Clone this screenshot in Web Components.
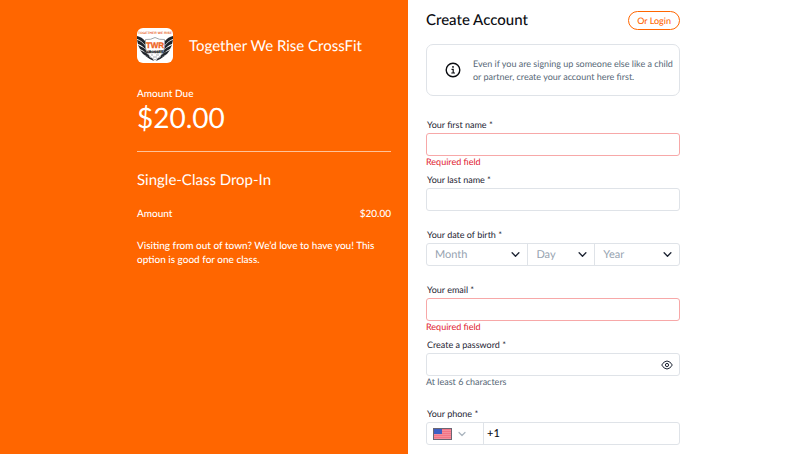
<!DOCTYPE html>
<html lang="en">
<head>
<meta charset="utf-8">
<meta name="viewport" content="width=device-width, initial-scale=1">
<title>Create Account</title>
<style>
  body {
    margin: 0;
    font-family: Lato, "Liberation Sans", sans-serif;
    font-size: 9px;
    text-rendering: geometricPrecision;
    color: #1d2433;
    background: white;
    --brand: #ff6600;
    --line: #dfe3e8;
    --muted: #566776;
    --error: #e0202e;
  }
</style>
</head>
<body>
<signup-page>
  <order-summary slot="summary" due="$20.00" item="Single-Class Drop-In" amount="$20.00">
    <gym-logo slot="logo"></gym-logo>
    <span slot="gym">Together We Rise CrossFit</span>
    Visiting from out of town? We’d love to have you! This option is good for one class.
  </order-summary>
  <account-header slot="form">Create Account</account-header>
  <info-note slot="form">Even if you are signing up someone else like a child or partner, create your account here first.</info-note>
  <text-field slot="form" label="Your first name *" error="Required field"></text-field>
  <text-field slot="form" label="Your last name *"></text-field>
  <birth-field slot="form" label="Your date of birth *"></birth-field>
  <text-field slot="form" type="email" label="Your email *" error="Required field"></text-field>
  <password-field slot="form" label="Create a password *" hint="At least 6 characters"></password-field>
  <phone-field slot="form" label="Your phone *" value="+1"></phone-field>
</signup-page>

<script>
function webComponent(tag, style, template) {
  customElements.define(tag, class extends HTMLElement {
    constructor() {
      super();
      const attr = (name) => this.getAttribute(name) ?? "";
      this.attachShadow({ mode: "open" }).innerHTML = `
        <style>
          * { box-sizing: border-box; }
          ${style}
        </style>
        ${template(attr)}
      `;
    }
  });
}

const fieldCss = /*css*/`
  :host { display: block; min-height: 55px; }
  label { display: block; padding-left: 1px; line-height: 17px; }
  input, select, button { font: inherit; color: inherit; margin: 0; text-rendering: inherit; }
  input { font-size: 11px; min-width: 0; outline: none; }
  .box {
    display: flex;
    width: 100%;
    height: 23px;
    border: 1px solid var(--line);
    border-radius: 3px;
    background: white;
  }
  .box > input { flex: 1; border: 0; padding: 0 8px; background: none; }
  .box > button { border: 0; background: none; padding: 0 6px; display: flex; align-items: center; }
  .box.invalid { border-color: #f7a8a8; }
  p { margin: 0; line-height: 12px; }
  .error { color: var(--error); }
  .hint { color: var(--muted); }
`;

const chevron = (color, size) => `
  <svg width="${size}" height="${size}" viewBox="0 0 8 8" fill="none" stroke="${color}">
    <path d="M1 2.5 4 5.5 7 2.5" stroke-width="1.2" stroke-linecap="round" stroke-linejoin="round"/>
  </svg>`;

webComponent("signup-page", /*css*/`
  :host { display: grid; grid-template-columns: 51fr 49fr; min-height: 100vh; }
  aside { background: var(--brand); color: white; display: flex; justify-content: flex-end; padding: 28px 17px; }
  main { padding: 11px 18px 9px; }
  aside slot, main slot { display: block; width: 100%; max-width: 254px; }
`, () => `
  <aside><slot name="summary"></slot></aside>
  <main><slot name="form"></slot></main>
`);

webComponent("order-summary", /*css*/`
  :host { display: block; font-size: 10px; font-weight: 500; }
  header { display: flex; align-items: center; gap: 16px; }
  h1, h2 { margin: 0; font-size: 15px; font-weight: 400; line-height: 20px; }
  p { margin: 0; line-height: 14px; }
  .due { margin-top: 24px; }
  .total { font-size: 28px; font-weight: 400; line-height: 32px; }
  hr { height: 1px; margin: 18px 0; border: 0; background: #ffc299; }
  .row { display: flex; justify-content: space-between; margin: 17px 0 18px; }
`, (attr) => `
  <header>
    <slot name="logo"></slot>
    <h1><slot name="gym"></slot></h1>
  </header>
  <p class="due">Amount Due</p>
  <p class="total">${attr("due")}</p>
  <hr>
  <h2>${attr("item")}</h2>
  <p class="row"><span>Amount</span><span>${attr("amount")}</span></p>
  <p><slot></slot></p>
`);

webComponent("gym-logo", /*css*/`
  :host { display: block; height: 35px; }
  svg { display: block; border-radius: 6px; }
  text { font-family: "Liberation Sans", sans-serif; font-weight: 700; text-anchor: middle; }
`, () => {
  const wing = `
    <path d="M0 8 Q5 9 8 13 L8 17 Q4 12 0 11Z"/>
    <path d="M0 12 Q5 13 9 19 L9 22 Q5 17 1 16Z"/>
    <path d="M1 17 Q6 19 10 23 L10 26 Q6 22 3 21Z"/>
    <path d="M3 22 Q8 24 12 27 L13 30 Q8 27 6 26Z"/>
    <path d="M7 27 Q11 29 15 30 L17 33 Q12 31 7 27Z"/>`;
  return `
    <svg width="36" height="35" viewBox="0 0 36 35" role="img" aria-label="Gym logo">
      <rect width="36" height="35" fill="white"/>
      <text x="18" y="6" font-size="3.4" fill="#e8642b">TOGETHER WE RISE</text>
      <g fill="#20252b">${wing}</g>
      <g fill="#20252b" transform="matrix(-1 0 0 1 36 0)">${wing}</g>
      <path d="M8.5 11.5Q14 12 18 9.5Q22 12 27.5 11.5V20Q26 28 18 32Q10 28 8.5 20Z" fill="white" stroke="#8b9096" stroke-width=".8"/>
      <text x="18" y="20" font-size="8" fill="#ee6424" stroke="#ee6424" stroke-width=".3">TWR</text>
      <text x="18" y="24.5" font-size="3.3" fill="#16191d" stroke="#16191d" stroke-width=".3">CROSSFIT</text>
      <path d="M14 27h2M19 27h3M16 29h4" stroke="#8b9096" stroke-width=".7"/>
    </svg>
  `;
});

webComponent("account-header", /*css*/`
  :host { display: flex; justify-content: space-between; align-items: center; }
  h1 { margin: 0; font-size: 15px; font-weight: 500; line-height: 19px; color: #0b0d12; }
  button {
    height: 19px;
    padding: 0 8px;
    font: 500 9px/17px Lato, sans-serif;
    text-rendering: inherit;
    color: var(--brand);
    background: white;
    border: 1px solid var(--brand);
    border-radius: 10px;
  }
`, () => `
  <h1><slot></slot></h1>
  <button type="button">Or Login</button>
`);

webComponent("info-note", /*css*/`
  :host {
    display: flex;
    align-items: center;
    gap: 12px;
    margin: 14px 0 20px;
    padding: 12px 2px 12px 18px;
    border: 1px solid var(--line);
    border-radius: 7px;
    color: var(--muted);
  }
  svg { flex: none; }
  p { margin: 0; line-height: 13px; }
`, () => `
  <svg width="16" height="16" viewBox="0 0 16 16" fill="none" stroke="#0b0d12" stroke-width="1.4">
    <circle cx="8" cy="8" r="6.8"/>
    <path d="M6.5 7.3H8.2V11M6.3 11H10" stroke-width="1.2"/>
    <circle cx="8" cy="4.9" r=".9" fill="#0b0d12" stroke="none"/>
  </svg>
  <p><slot></slot></p>
`);

webComponent("text-field", fieldCss, (attr) => `
  <label for="field">${attr("label")}</label>
  <div class="box ${attr("error") ? "invalid" : ""}">
    <input id="field" type="${attr("type") || "text"}">
  </div>
  ${attr("error") ? `<p class="error">${attr("error")}</p>` : ""}
`);

webComponent("birth-field", fieldCss + /*css*/`
  .part { display: grid; align-items: center; }
  .month { flex: 102; }
  .day { flex: 67; }
  .year { flex: 85; }
  .part + .part { border-left: 1px solid var(--line); }
  .part > * { grid-area: 1 / 1; }
  .part svg { justify-self: end; margin-right: 7px; pointer-events: none; }
  select {
    width: 100%;
    height: 21px;
    padding: 0 8px;
    border: 0;
    background: none;
    appearance: none;
    font-size: 11px;
    color: #96a3b0;
  }
`, (attr) => `
  <label for="month">${attr("label")}</label>
  <div class="box">
    ${["Month", "Day", "Year"].map((name) => `
      <div class="part ${name.toLowerCase()}">
        <select id="${name.toLowerCase()}" aria-label="${name}"><option>${name}</option></select>
        ${chevron("#1d2433", 9)}
      </div>`).join("")}
  </div>
`);

webComponent("password-field", fieldCss + /*css*/`
  :host { min-height: 69px; }
`, (attr) => `
  <label for="field">${attr("label")}</label>
  <div class="box">
    <input id="field" type="password">
    <button type="button" aria-label="Show password">
      <svg width="12" height="10" viewBox="0 0 12 10" fill="none" stroke="#1d2433">
        <path d="M.7 5Q3 1 6 1T11.3 5Q9 9 6 9T.7 5Z"/>
        <circle cx="6" cy="5" r="1.6"/>
      </svg>
    </button>
  </div>
  <p class="hint">${attr("hint")}</p>
`);

webComponent("phone-field", fieldCss + /*css*/`
  :host { min-height: 0; }
  .box > button { width: 57px; gap: 6px; padding: 0 6px; border-right: 1px solid var(--line); }
  .box > input { padding: 0 3px; font-weight: 500; color: #0b0d12; }
`, (attr) => `
  <label for="field">${attr("label")}</label>
  <div class="box">
    <button type="button" aria-label="Country">
      <svg width="19" height="12" viewBox="0 0 19 12">
        <rect width="19" height="12" fill="#f58f9c"/>
        <path d="M0 1.5H19M0 3.5H19M0 5.5H19M0 7.5H19M0 9.5H19" stroke="#f27586"/>
        <rect width="9" height="6" fill="#3d5fc4"/>
        <rect x=".5" y=".5" width="18" height="11" fill="none" stroke="#6b6673"/>
      </svg>
      ${chevron("#aab4be", 8)}
    </button>
    <input id="field" type="tel" value="${attr("value")}">
  </div>
`);
</script>
</body>
</html>
